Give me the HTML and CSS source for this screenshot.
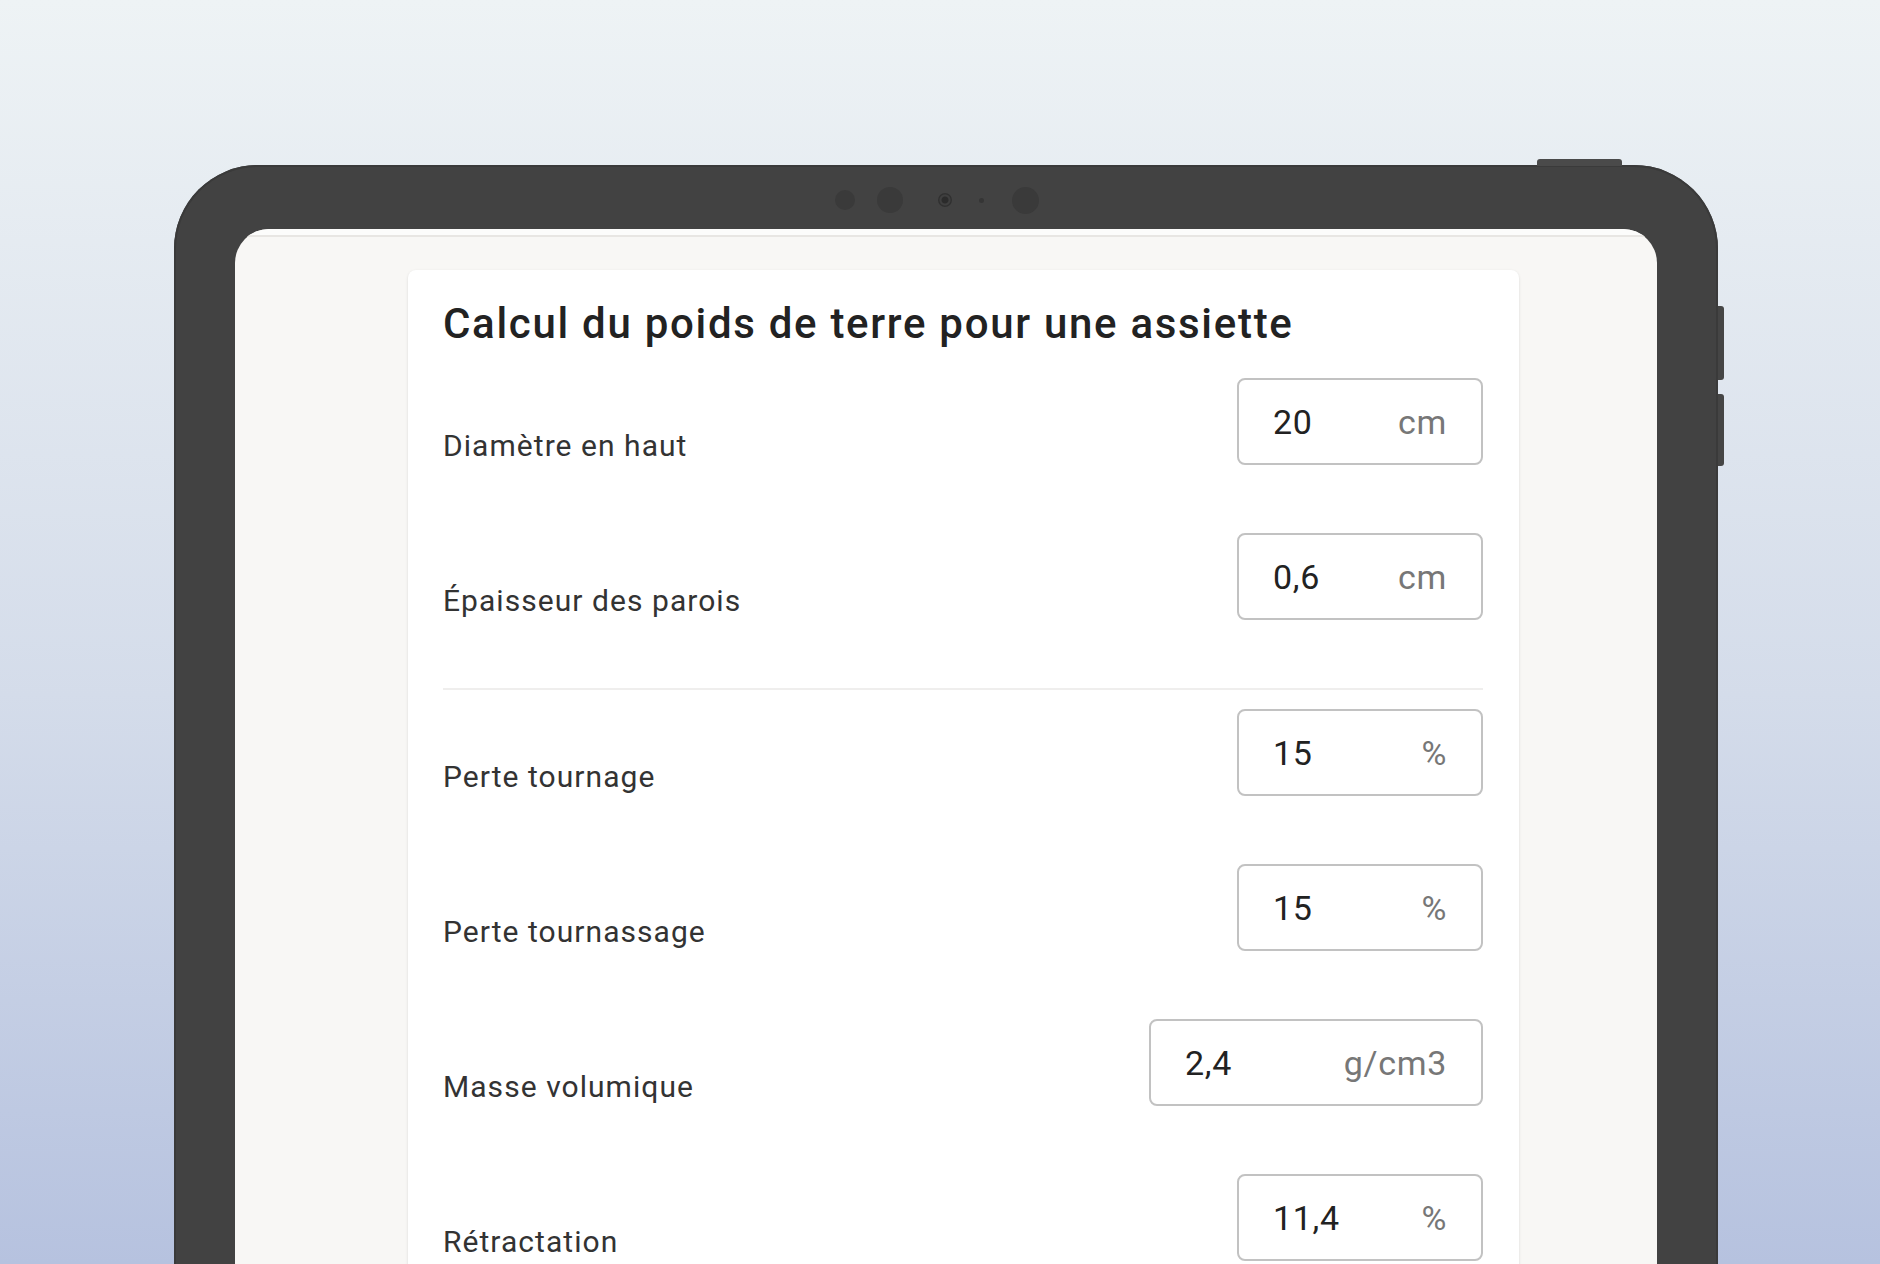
FILE: index.html
```html
<!DOCTYPE html>
<html lang="fr">
  <head>
    <meta charset="UTF-8" />
    <meta name="viewport" content="width=device-width, initial-scale=1.0" />
    <title>Calcul du poids de terre</title>
    <link rel="stylesheet" href="styles.css">
  </head>

  <body>
    <div class="device">
      <span class="btn-top"></span>
      <span class="btn-side btn-side-1"></span>
      <span class="btn-side btn-side-2"></span>

      <div class="bezel-top">
        <div class="sensors">
          <span class="dot dot-sm"></span>
          <span class="dot dot-md"></span>
          <span class="lens"></span>
          <span class="led"></span>
          <span class="dot dot-lg"></span>
        </div>
      </div>

      <div class="screen">
        <div class="status-bar"></div>
        <div class="content">
          <div class="card">
            <h2>Calcul du poids de terre pour une assiette</h2>

            <div class="form-row">
              <label for="diametre">Diamètre en haut</label>
              <div class="field">
                <input type="text" id="diametre" value="20" />
                <span class="unit">cm</span>
              </div>
            </div>

            <div class="form-row">
              <label for="epaisseur">Épaisseur des parois</label>
              <div class="field">
                <input type="text" id="epaisseur" value="0,6" />
                <span class="unit">cm</span>
              </div>
            </div>

            <hr />

            <div class="form-row">
              <label for="tournage">Perte tournage</label>
              <div class="field">
                <input type="text" id="tournage" value="15" />
                <span class="unit">%</span>
              </div>
            </div>

            <div class="form-row">
              <label for="tournassage">Perte tournassage</label>
              <div class="field">
                <input type="text" id="tournassage" value="15" />
                <span class="unit">%</span>
              </div>
            </div>

            <div class="form-row">
              <label for="masse">Masse volumique</label>
              <div class="field field-wide">
                <input type="text" id="masse" value="2,4" />
                <span class="unit">g/cm3</span>
              </div>
            </div>

            <div class="form-row">
              <label for="retractation">Rétractation</label>
              <div class="field">
                <input type="text" id="retractation" value="11,4" />
                <span class="unit">%</span>
              </div>
            </div>
          </div>
        </div>
      </div>
    </div>
  </body>
</html>
```

FILE: styles.css
```css
html,
body {
  margin: 0;
  height: 1264px;
  overflow: hidden;
}

body {
  font-family: Roboto, "Liberation Sans", Arial, sans-serif;
  background: linear-gradient(180deg, #eef3f5 0%, #d4dcea 55%, #b6c2df 100%);
}

/* Device frame */
.device {
  position: relative;
  width: 1544px;
  height: 1200px;
  margin: 165px 0 0 174px;
  padding: 0 61px;
  box-sizing: border-box;
  background-color: #424242;
  border-radius: 84px 84px 0 0;
  box-shadow: inset 0 0 0 2px #3a3a3a;
}

.btn-top {
  position: absolute;
  top: -6px;
  left: 1363px;
  width: 85px;
  height: 7px;
  background-color: #4a4a4a;
  border-radius: 3px 3px 0 0;
}

.btn-side {
  position: absolute;
  right: -6px;
  width: 6px;
  background-color: #454545;
  border-radius: 0 3px 3px 0;
}
.btn-side-1 {
  top: 141px;
  height: 74px;
}
.btn-side-2 {
  top: 229px;
  height: 72px;
}

.bezel-top {
  height: 64px;
  padding-top: 6px;
  box-sizing: border-box;
  display: flex;
  align-items: center;
}

.sensors {
  display: flex;
  align-items: center;
  margin-left: 600px;
}

.dot,
.lens,
.led {
  display: block;
  border-radius: 50%;
  background-color: #3a3a3a;
}
.dot-sm {
  width: 20px;
  height: 20px;
  margin-right: 22px;
}
.dot-md {
  width: 26px;
  height: 26px;
  margin-right: 35px;
}
.lens {
  width: 14px;
  height: 14px;
  margin-right: 27px;
  background: radial-gradient(circle, #2b2b2b 0 3px, #3f3f3f 4px 5px, #303030 6px);
}
.led {
  width: 5px;
  height: 5px;
  margin-right: 28px;
  background-color: #353535;
}
.dot-lg {
  width: 27px;
  height: 27px;
}

/* Screen */
.screen {
  height: 1100px;
  background-color: #f8f7f5;
  border-radius: 34px 34px 0 0;
  overflow: hidden;
}

.status-bar {
  height: 6px;
  background-color: #fcfcfb;
  border-bottom: 2px solid #e8e6e3;
}

.content {
  padding: 33px 0 0 173px;
}

.card {
  width: 1111px;
  box-sizing: border-box;
  padding: 29px 36px 40px 35px;
  background-color: #fff;
  border-radius: 8px;
  box-shadow: 0 1px 3px rgba(0, 0, 0, 0.12);
}

h2 {
  margin: 0 0 29px;
  font-size: 42px;
  line-height: 50px;
  font-weight: 500;
  letter-spacing: 1.7px;
  color: #222;
}

.form-row {
  display: flex;
  justify-content: space-between;
  align-items: flex-end;
  margin-bottom: 68px;
}

label {
  padding-bottom: 2px;
  font-size: 30px;
  line-height: 35px;
  letter-spacing: 1.05px;
  color: #333;
}

.field {
  display: flex;
  justify-content: space-between;
  align-items: center;
  width: 246px;
  height: 87px;
  padding: 0 34px;
  box-sizing: border-box;
  border: 2px solid #c2c2c2;
  border-radius: 8px;
  font-size: 34px;
  letter-spacing: 0.7px;
}
.field-wide {
  width: 334px;
}

.field input {
  width: 110px;
  padding: 0;
  border: none;
  outline: none;
  background: transparent;
  font-family: inherit;
  font-size: 34px;
  letter-spacing: 0.7px;
  color: #222;
}

.unit {
  color: #777;
}

hr {
  height: 2px;
  margin: 0 0 19px;
  border: none;
  background-color: #efeeed;
}
```
